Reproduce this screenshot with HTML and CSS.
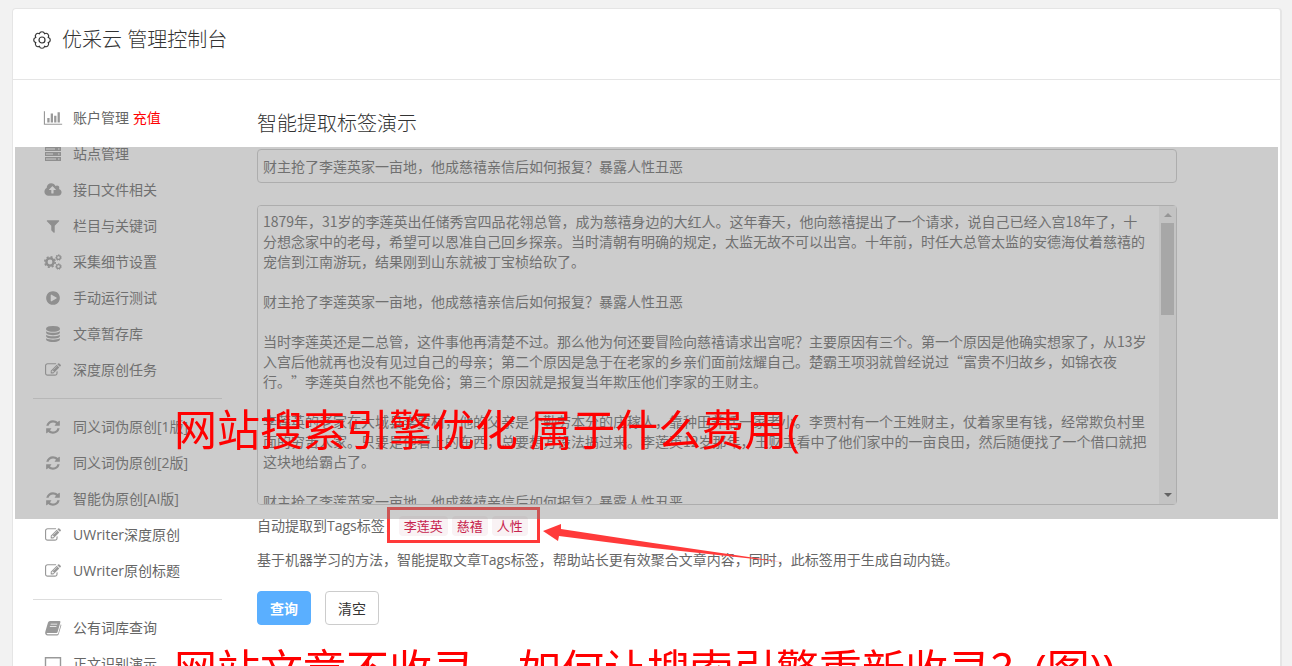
FILE: index.html
```
<!DOCTYPE html>
<html lang="zh-CN">
<head>
  <meta charset="UTF-8" />
  <meta name="viewport" content="width=device-width, initial-scale=1.0"/>
  <title>优采云 管理控制台</title>
  <link rel="stylesheet" href="styles.css">
</head>
<body>
  <!-- icon set -->
  <svg class="sprite" aria-hidden="true">
    <symbol id="i-chart" viewBox="0 0 2048 1792"><path d="M640 896v512h-256v-512h256zm384-512v1024h-256v-1024h256zm1024 1152v128h-2048v-1536h128v1408h1920zm-640-896v768h-256v-768h256zm384-384v1152h-256v-1152h256z"/></symbol>
    <symbol id="i-server" viewBox="0 0 18 16"><path fill-rule="evenodd" d="M1 1h16v4H1zM2 2.500v1h9v-1zM14 2.500v1h1.500v-1zM1 6h16v4H1zM2 7.500v1h7v-1zM14 7.500v1h1.500v-1zM1 11h16v4H1zM2 12.500v1h10v-1zM14 12.500v1h1.500v-1z"/></symbol>
    <symbol id="i-upload" viewBox="0 0 1920 1792"><path d="M1280 864q0-14-9-23l-352-352q-9-9-23-9t-23 9l-351 351q-10 12-10 24 0 14 9 23t23 9h224v352q0 13 9.500 22.500t22.500 9.500h192q13 0 22.500-9.500t9.500-22.500v-352h224q13 0 22.500-9.500t9.500-22.500zm640 288q0 159-112.500 271.500t-271.500 112.500h-1088q-185 0-316.500-131.500t-131.500-316.500q0-130 70-240t188-165q-2-30-2-43 0-212 150-362t362-150q156 0 285.500 87t188.500 231q71-62 166-62 106 0 181 75t75 181q0 76-41 138 130 31 213.500 135.500t83.500 238.500z"/></symbol>
    <symbol id="i-filter" viewBox="0 0 1792 1792"><path d="M1595 295q17 41-14 70l-493 493v742q0 42-39 59-13 5-25 5-27 0-45-19l-256-256q-19-19-19-45v-486l-493-493q-31-29-14-70 17-39 59-39h1280q42 0 59 39z"/></symbol>
    <symbol id="i-cogs" viewBox="0 0 18 16">
      <g fill="none" stroke="currentColor">
        <circle cx="6" cy="8" r="3.600" stroke-width="2.400"/>
        <circle cx="6" cy="8" r="5.200" stroke-width="1.600" stroke-dasharray="2.040 2.040"/>
        <circle cx="14.500" cy="3.500" r="1.900" stroke-width="1.300"/>
        <circle cx="14.500" cy="3.500" r="2.800" stroke-width="1" stroke-dasharray="1.260 1.250"/>
        <circle cx="14.500" cy="12.500" r="1.900" stroke-width="1.300"/>
        <circle cx="14.500" cy="12.500" r="2.800" stroke-width="1" stroke-dasharray="1.260 1.250"/>
      </g>
    </symbol>
    <symbol id="i-play" viewBox="0 0 1792 1792"><path d="M896 128q209 0 385.500 103t279.500 279.500 103 385.500-103 385.500-279.500 279.500-385.500 103-385.500-103-279.500-279.500-103-385.500 103-385.500 279.500-279.500 385.500-103zm384 823q32-18 32-55t-32-55l-544-320q-31-19-64-1-32 19-32 56v640q0 37 32 56 16 8 32 8 17 0 32-9z"/></symbol>
    <symbol id="i-database" viewBox="0 0 1792 1792"><path d="M896 768q237 0 443-43t325-127v170q0 69-103 128t-280 93.500-385 34.500-385-34.500-280-93.500-103-128v-170q119 84 325 127t443 43zm0 768q237 0 443-43t325-127v170q0 69-103 128t-280 93.500-385 34.500-385-34.500-280-93.500-103-128v-170q119 84 325 127t443 43zm0-384q237 0 443-43t325-127v170q0 69-103 128t-280 93.500-385 34.500-385-34.500-280-93.500-103-128v-170q119 84 325 127t443 43zm0-1152q208 0 385 34.500t280 93.500 103 128v128q0 69-103 128t-280 93.500-385 34.500-385-34.500-280-93.500-103-128v-128q0-69 103-128t280-93.500 385-34.500z"/></symbol>
    <symbol id="i-edit" viewBox="0 0 1792 1792"><path d="M888 1184l116-116-152-152-116 116v56h96v96h56zm440-720q-16-16-33 1l-350 350q-17 17-1 33t33-1l350-350q17-17 1-33zm80 594v190q0 119-84.500 203.500t-203.500 84.500h-832q-119 0-203.500-84.500t-84.500-203.500v-832q0-119 84.500-203.500t203.500-84.500h832q63 0 117 25 15 7 18 23 3 17-9 29l-49 49q-14 14-32 8-23-6-45-6h-832q-66 0-113 47t-47 113v832q0 66 47 113t113 47h832q66 0 113-47t47-113v-126q0-13 9-22l64-64q15-15 35-7t20 29zm-96-738l288 288-672 672h-288v-288zm444 132l-92 92-288-288 92-92q28-28 68-28t68 28l152 152q28 28 28 68t-28 68z"/></symbol>
    <symbol id="i-refresh" viewBox="0 0 1536 1792"><path d="M1511 1056q0 5-1 7-64 268-268 434.500t-478 166.500q-146 0-282.500-55t-243.500-157l-129 129q-19 19-45 19t-45-19-19-45v-448q0-26 19-45t45-19h448q26 0 45 19t19 45-19 45l-137 137q71 66 161 102t187 36q134 0 250-65t186-179q11-17 53-117 8-23 30-23h192q13 0 22.500 9.500t9.500 22.500zm25-800v448q0 26-19 45t-45 19h-448q-26 0-45-19t-19-45 19-45l138-138q-148-137-349-137-134 0-250 65t-186 179q-11 17-53 117-8 23-30 23h-199q-13 0-22.500-9.500t-9.500-22.500v-7q65-268 270-434.500t480-166.500q146 0 284 55.500t245 156.500l130-129q19-19 45-19t45 19 19 45z"/></symbol>
    <symbol id="i-book" viewBox="0 0 18 16"><path fill-rule="evenodd" d="M6 1h9.500q1.200 0 .9 1.200L13.600 12q-.3 1-1.300 1H3.600q-1 0-1 .6.200.7 1.200.7h9.400q.7 0 1-.8L16.800 4.300q.7.400.5 1.200l-2.600 8.700Q14.300 15.500 13 15.500H3.500Q1.600 15.500 1.200 13.500 1 12.500 1.500 11L4 2.600Q4.500 1 6 1zM6.800 3.700l-.3.900h6.600l.3-.9zM6 6.200l-.3.900h6.600l.3-.9z"/></symbol>
    <symbol id="i-laptop" viewBox="0 0 18 16"><path fill="none" stroke="currentColor" stroke-width="1.400" d="M1.500 1.700h15v10h-15zM0 14.300h18"/></symbol>
  </svg>

  <div class="panel">
    <header class="panel-header">
      <svg class="gear" viewBox="0 0 20 20" aria-hidden="true">
        <path d="M16.300 7.400A2.700 2.700 0 0 1 16.300 12.600A2.700 2.700 0 0 1 12.600 16.300A2.700 2.700 0 0 1 7.400 16.300A2.700 2.700 0 0 1 3.700 12.600A2.700 2.700 0 0 1 3.700 7.400A2.700 2.700 0 0 1 7.400 3.700A2.700 2.700 0 0 1 12.600 3.700A2.700 2.700 0 0 1 16.300 7.400z"/>
        <circle cx="10" cy="10" r="3"/>
      </svg>
      <h1>优采云 管理控制台</h1>
    </header>

    <div class="panel-body">
      <nav class="sidebar">
        <ul>
          <li><a href="#"><svg class="icon"><use href="#i-chart"/></svg><span>账户管理 <em>充值</em></span></a></li>
          <li><a href="#"><svg class="icon"><use href="#i-server"/></svg>站点管理</a></li>
          <li><a href="#"><svg class="icon"><use href="#i-upload"/></svg>接口文件相关</a></li>
          <li><a href="#"><svg class="icon"><use href="#i-filter"/></svg>栏目与关键词</a></li>
          <li><a href="#"><svg class="icon"><use href="#i-cogs"/></svg>采集细节设置</a></li>
          <li><a href="#"><svg class="icon"><use href="#i-play"/></svg>手动运行测试</a></li>
          <li><a href="#"><svg class="icon"><use href="#i-database"/></svg>文章暂存库</a></li>
          <li><a href="#"><svg class="icon"><use href="#i-edit"/></svg>深度原创任务</a></li>
        </ul>
        <hr>
        <ul>
          <li><a href="#"><svg class="icon"><use href="#i-refresh"/></svg>同义词伪原创[1版]</a></li>
          <li><a href="#"><svg class="icon"><use href="#i-refresh"/></svg>同义词伪原创[2版]</a></li>
          <li><a href="#"><svg class="icon"><use href="#i-refresh"/></svg>智能伪原创[AI版]</a></li>
          <li><a href="#"><svg class="icon"><use href="#i-edit"/></svg>UWriter深度原创</a></li>
          <li><a href="#"><svg class="icon"><use href="#i-edit"/></svg>UWriter原创标题</a></li>
        </ul>
        <hr>
        <ul>
          <li><a href="#"><svg class="icon"><use href="#i-book"/></svg>公有词库查询</a></li>
          <li><a href="#"><svg class="icon"><use href="#i-laptop"/></svg>正文识别演示</a></li>
        </ul>
      </nav>

      <main class="content">
        <h2>智能提取标签演示</h2>
        <form id="tagForm">
          <input type="text" id="title" aria-label="标题" value="财主抢了李莲英家一亩地，他成慈禧亲信后如何报复？暴露人性丑恶">
          <div class="article">
            <textarea id="article" aria-label="正文">1879年，31岁的李莲英出任储秀宫四品花翎总管，成为慈禧身边的大红人。这年春天，他向慈禧提出了一个请求，说自己已经入宫18年了，十分想念家中的老母，希望可以恩准自己回乡探亲。当时清朝有明确的规定，太监无故不可以出宫。十年前，时任大总管太监的安德海仗着慈禧的宠信到江南游玩，结果刚到山东就被丁宝桢给砍了。

财主抢了李莲英家一亩地，他成慈禧亲信后如何报复？暴露人性丑恶

当时李莲英还是二总管，这件事他再清楚不过。那么他为何还要冒险向慈禧请求出宫呢？主要原因有三个。第一个原因是他确实想家了，从13岁入宫后他就再也没有见过自己的母亲；第二个原因是急于在老家的乡亲们面前炫耀自己。楚霸王项羽就曾经说过“富贵不归故乡，如锦衣夜行。”李莲英自然也不能免俗；第三个原因就是报复当年欺压他们李家的王财主。

李莲英的老家在大城县李贾村，他的父亲是个勤劳本分的庄稼人，靠种田养活一家老小。李贾村有一个王姓财主，仗着家里有钱，经常欺负村里面的穷苦人家。只要是他看上的东西，总要想方设法搞过来。李莲英12岁那年，王财主看中了他们家中的一亩良田，然后随便找了一个借口就把这块地给霸占了。

财主抢了李莲英家一亩地，他成慈禧亲信后如何报复？暴露人性丑恶</textarea>
            <div class="scrollbar">
              <svg viewBox="0 0 8 4" fill="#a3a3a3"><path d="M0 4L4 0L8 4z"/></svg>
              <div class="thumb"></div>
              <svg viewBox="0 0 8 4" fill="#505050"><path d="M0 0L4 4L8 0z"/></svg>
            </div>
          </div>

          <div class="tags">
            <span>自动提取到Tags标签：</span>
            <code>李莲英</code>
            <code>慈禧</code>
            <code>人性</code>
            <div class="mark"></div>
            <svg class="arrow" viewBox="0 0 240 42" aria-hidden="true"><path d="M0 9L18 2L18 7L110 21L240 40L110 26L16 14L15 19z"/></svg>
          </div>
          <p class="hint">基于机器学习的方法，智能提取文章Tags标签，帮助站长更有效聚合文章内容，同时，此标签用于生成自动内链。</p>

          <div class="actions">
            <button type="submit" class="btn btn-primary">查询</button>
            <button type="reset" class="btn">清空</button>
          </div>
        </form>
      </main>
    </div>

    <div class="shade"></div>
    <div class="caption">
      <p>网站搜索引擎优化 属于什么费用(</p>
      <p>网站文章不收录，如何让搜索引擎重新收录？(图))</p>
    </div>
  </div>
</body>
</html>
```
FILE: styles.css
```
* {
  box-sizing: border-box;
  margin: 0;
  padding: 0;
}

body {
  height: 100vh;
  overflow: hidden;
  background: #f2f2f2;
  color: #666;
  font-family: "Open Sans", "Noto Sans CJK SC", sans-serif;
  font-size: 14px;
  line-height: 20px;
  text-spacing-trim: space-all;
}

.sprite {
  display: none;
}

.panel {
  position: relative;
  margin: 8px 10px 0 12px;
  background: #fff;
  border: 1px solid #e5e5e5;
  border-right-width: 2px;
  border-radius: 4px;
}

.panel-header {
  display: flex;
  align-items: center;
  gap: 10px;
  height: 71px;
  padding: 0 19px 8px;
  border-bottom: 1px solid #e5e5e5;
}

.gear {
  width: 20px;
  height: 20px;
  fill: none;
  stroke: #333;
  stroke-width: 1.2;
}

h1,
h2 {
  color: #333;
  font-size: 20px;
  font-weight: 300;
  line-height: 28px;
}

.panel-body {
  display: flex;
  gap: 35px;
  padding: 20px;
}

.sidebar {
  flex: 0 0 189px;
}

.sidebar ul {
  list-style: none;
}

.sidebar a {
  display: flex;
  align-items: center;
  gap: 10px;
  height: 36px;
  padding-left: 10px;
  color: #666;
  text-decoration: none;
  white-space: nowrap;
}

.sidebar em {
  color: #f00;
  font-style: normal;
}

.sidebar hr {
  margin: 10px 0;
  border: 0;
  border-top: 1px solid #ddd;
}

.icon {
  width: 20px;
  height: 16px;
  fill: #999;
  color: #999;
}

.content {
  flex: 1;
  padding: 10px 83px 0 0;
}

.content h2 {
  margin-bottom: 11px;
}

input,
textarea {
  display: block;
  width: 100%;
  border: 1px solid #ccc;
  border-radius: 4px;
  background: #fff;
  color: #666;
  font-family: "Noto Sans CJK SC", sans-serif;
  font-size: 14px;
  line-height: 20px;
}

input {
  height: 34px;
  margin-bottom: 22px;
  padding: 5px;
}

.article {
  position: relative;
}

textarea {
  height: 300px;
  padding: 5px 27px 5px 5px;
  resize: none;
  overflow-y: scroll;
  scrollbar-width: none;
}

.scrollbar {
  position: absolute;
  top: 1px;
  right: 1px;
  bottom: 1px;
  display: flex;
  flex-direction: column;
  align-items: center;
  width: 17px;
  padding: 7px 0;
  background: #f1f1f1;
}

.scrollbar svg {
  width: 8px;
  height: 4px;
}

.thumb {
  width: 13px;
  height: 92px;
  margin: 6px 0 auto;
  background: #c1c1c1;
}

.tags {
  position: relative;
  display: flex;
  align-items: center;
  gap: 4px;
  height: 20px;
  margin: 11px 0 14px;
}

.tags span {
  margin-right: -4px;
}

code {
  padding: 0 5px;
  border-radius: 4px;
  background: #f9f2f4;
  color: #c7254e;
  font-family: "Noto Sans CJK SC", sans-serif;
  font-size: 13px;
}

/* red frame and arrow pointing at the tags */
.mark {
  position: absolute;
  top: -9px;
  left: 130px;
  width: 153px;
  height: 36px;
  border: 3px solid #ff3a3a;
}

.arrow {
  position: absolute;
  top: 6px;
  left: 286px;
  width: 240px;
  height: 42px;
  fill: #ff3a3a;
}

.hint {
  margin-bottom: 21px;
}

.actions {
  display: flex;
  gap: 14px;
}

.btn {
  height: 34px;
  padding: 0 12px;
  border: 1px solid #ccc;
  border-radius: 4px;
  background: #fff;
  color: #333;
  font-family: inherit;
  font-size: 14px;
  cursor: pointer;
}

.btn-primary {
  border-color: #5aafff;
  background: #5aafff;
  color: #fff;
  font-weight: bold;
}

.shade {
  position: absolute;
  top: 138px;
  left: 2px;
  right: 2px;
  height: 372px;
  background: rgba(128, 128, 128, 0.4);
  pointer-events: none;
}

.caption {
  position: absolute;
  top: 391px;
  left: 161px;
  display: grid;
  gap: 180px;
  color: #f00;
  font-size: 43px;
  line-height: 60px;
  white-space: nowrap;
  pointer-events: none;
}
```
